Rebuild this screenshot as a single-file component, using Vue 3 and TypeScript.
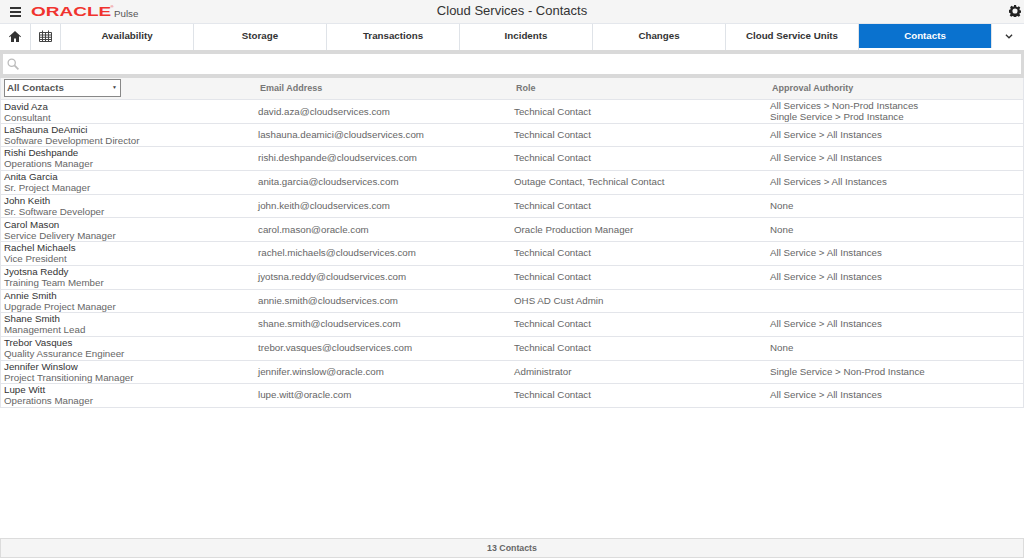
<script setup lang="ts">
interface Contact { name: string; title: string; email: string; role: string; auth: string[] }
const tabs: string[] = ['Availability', 'Storage', 'Transactions', 'Incidents', 'Changes', 'Cloud Service Units', 'Contacts']
const a = ['All Service > All Instances']
const contacts: Contact[] = [
  { name: 'David Aza', title: 'Consultant', email: 'david.aza@cloudservices.com', role: 'Technical Contact', auth: ['All Services > Non-Prod Instances', 'Single Service > Prod Instance'] },
  { name: 'LaShauna DeAmici', title: 'Software Development Director', email: 'lashauna.deamici@cloudservices.com', role: 'Technical Contact', auth: a },
  { name: 'Rishi Deshpande', title: 'Operations Manager', email: 'rishi.deshpande@cloudservices.com', role: 'Technical Contact', auth: a },
  { name: 'Anita Garcia', title: 'Sr. Project Manager', email: 'anita.garcia@cloudservices.com', role: 'Outage Contact, Technical Contact', auth: ['All Services > All Instances'] },
  { name: 'John Keith', title: 'Sr. Software Developer', email: 'john.keith@cloudservices.com', role: 'Technical Contact', auth: ['None'] },
  { name: 'Carol Mason', title: 'Service Delivery Manager', email: 'carol.mason@oracle.com', role: 'Oracle Production Manager', auth: ['None'] },
  { name: 'Rachel Michaels', title: 'Vice President', email: 'rachel.michaels@cloudservices.com', role: 'Technical Contact', auth: a },
  { name: 'Jyotsna Reddy', title: 'Training Team Member', email: 'jyotsna.reddy@cloudservices.com', role: 'Technical Contact', auth: a },
  { name: 'Annie Smith', title: 'Upgrade Project Manager', email: 'annie.smith@cloudservices.com', role: 'OHS AD Cust Admin', auth: [] },
  { name: 'Shane Smith', title: 'Management Lead', email: 'shane.smith@cloudservices.com', role: 'Technical Contact', auth: a },
  { name: 'Trebor Vasques', title: 'Quality Assurance Engineer', email: 'trebor.vasques@cloudservices.com', role: 'Technical Contact', auth: ['None'] },
  { name: 'Jennifer Winslow', title: 'Project Transitioning Manager', email: 'jennifer.winslow@oracle.com', role: 'Administrator', auth: ['Single Service > Non-Prod Instance'] },
  { name: 'Lupe Witt', title: 'Operations Manager', email: 'lupe.witt@oracle.com', role: 'Technical Contact', auth: a },
]
</script>

<template>
  <div class="page">
    <header class="top">
      <div class="brand">
        <svg class="burger" width="11" height="10" viewBox="0 0 11 10"><path d="M0 0h11v2H0zM0 4h11v2H0zM0 8h11v2H0z" fill="#333" /></svg>
        <span class="logo">ORACLE</span><span class="reg">®</span>
        <span class="pulse">Pulse</span>
      </div>
      <h1 class="title">Cloud Services - Contacts</h1>
      <svg class="gear" width="12" height="12" viewBox="0 0 14 14">
        <path d="M5.800 0h2.400l.4 2 1.200.5 1.700-1.100 1.700 1.700-1.100 1.700.5 1.200 2 .4v2.400l-2 .4-.5 1.200 1.100 1.700-1.700 1.700-1.700-1.100-1.200.5-.4 2H5.800l-.4-2-1.200-.5-1.700 1.100-1.700-1.700 1.100-1.700-.5-1.200-2-.4V5.800l2-.4.5-1.200L1.300 2.500 3 .8l1.700 1.100 1.200-.5z" fill="#222" />
        <circle cx="7" cy="7" r="3" fill="#f5f5f5" />
      </svg>
    </header>

    <nav class="tabs">
      <div class="tab icon home">
        <svg width="12" height="11" viewBox="0 0 12 11"><path d="M6 0 0 5.500l.7.700L2 5v6h3V7.500h2V11h3V5l1.300 1.200.7-.7z" fill="#333" /></svg>
      </div>
      <div class="tab icon cal">
        <svg width="13" height="12" viewBox="0 0 13 12" fill="none" stroke="#444" stroke-width="1"><path d="M.5 2.500h12v9H.5zM.5 5h12M.5 7.250h12M.5 9.500h12M3.500 2.500v9M6.500 2.500v9M9.500 2.500v9M3.500 .5v2M9.500 .5v2" /></svg>
      </div>
      <div v-for="t in tabs" :key="t" class="tab" :class="{ active: t === 'Contacts' }">{{ t }}</div>
      <div class="tab icon more">
        <svg width="8" height="5" viewBox="0 0 9 6" fill="none" stroke="#333" stroke-width="1.600"><path d="M.8 1 4.500 4.500 8.200 1" /></svg>
      </div>
    </nav>

    <div class="search">
      <svg width="12" height="12" viewBox="0 0 14 14" fill="none" stroke="#bbb"><circle cx="5.500" cy="5.500" r="4.200" stroke-width="1.500" /><path d="m8.700 8.700 4.600 4.600" stroke-width="2" /></svg>
    </div>

    <section class="table">
      <div class="row head">
        <div class="cell first"><div class="select"><span>All Contacts</span><i>▼</i></div></div>
        <div class="cell hcell">Email Address</div>
        <div class="cell hcell">Role</div>
        <div class="cell hcell">Approval Authority</div>
      </div>
      <div v-for="c in contacts" :key="c.email" class="row">
        <div class="cell first">
          <div class="name">{{ c.name }}</div>
          <div>{{ c.title }}</div>
        </div>
        <div class="cell">{{ c.email }}</div>
        <div class="cell">{{ c.role }}</div>
        <div class="cell"><div v-for="l in c.auth" :key="l">{{ l }}</div></div>
      </div>
    </section>

    <footer class="foot">13 Contacts</footer>
  </div>
</template>

<style scoped>
.page {
  display: flex;
  flex-direction: column;
  height: 558px;
  overflow: hidden;
  background: #fff;
  font-family: "Liberation Sans", Arial, sans-serif;
  font-size: 9.750px;
  color: #666;
}
.top {
  position: relative;
  display: flex;
  align-items: center;
  justify-content: center;
  flex: none;
  height: 23px;
  background: #f5f5f5;
}
.brand {
  position: absolute;
  left: 10px;
  top: 0;
  display: flex;
  align-items: center;
  height: 23px;
}
.burger { margin-right: 10px; }
.logo {
  color: #f0332e;
  font-size: 13px;
  font-weight: 700;
  transform: scaleX(1.460);
  transform-origin: left center;
  width: 79.500px;
}
.reg {
  width: 3.500px;
  margin-top: -9px;
  font-size: 4px;
  line-height: 4px;
  color: #f0332e;
}
.pulse { margin: 4px 0 0 0; font-size: 9.750px; color: #555; }
.title {
  margin: 0 0 2px;
  font-size: 13px;
  font-weight: 400;
  color: #333;
}
.gear { position: absolute; right: 3px; top: 5px; }
.tabs {
  display: flex;
  flex: none;
  height: 27px;
  border-top: 1px solid #e4e7ec;
  box-sizing: border-box;
}
.tab {
  display: flex;
  align-items: center;
  justify-content: center;
  flex: 0 0 133px;
  box-sizing: border-box;
  padding-bottom: 4px;
  border-right: 1px solid #dfe3e8;
  font-size: 9.750px;
  font-weight: 700;
  color: #333;
}
.tab.home { flex-basis: 31px; padding-bottom: 2px; }
.tab.cal { flex-basis: 30px; padding-bottom: 2px; }
.tab.more { flex: 1; border-right: 0; padding-bottom: 2px; }
.tab.active {
  background: #0a72cf;
  color: #fff;
  margin-bottom: 2px;
  padding-bottom: 2px;
  margin-right: 1px;
}
.search {
  display: flex;
  align-items: center;
  flex: none;
  height: 28px;
  box-sizing: border-box;
  padding-left: 4px;
  border: 3px solid #d9d9d9;
  border-width: 4px 3px 4px 3px;
  background: #fff;
}
.table { flex: 1; }
.row {
  display: grid;
  grid-template-columns: 258px 256px 256px 1fr;
  align-items: center;
  height: 23.700px;
  box-sizing: border-box;
  border: 1px solid #e3e5ea;
  border-width: 0 1px 1px 1px;
  line-height: 11px;
}
.row.head {
  height: 22px;
  background: #f5f5f5;
}
.cell { min-width: 0; }
.first { padding-left: 3px; }
.row:not(.head) .first { padding-bottom: 0.500px; }
.row.head .first { padding-bottom: 2px; }
.row:not(.head) .cell:not(.first) { margin-left: -1px; padding-bottom: 1.500px; }
.hcell { font-size: 9px; font-weight: 700; color: #777; padding-left: 1px; }
.name { color: #333; }
.select {
  display: flex;
  align-items: center;
  justify-content: space-between;
  width: 117px;
  height: 18px;
  box-sizing: border-box;
  padding: 0 3px 0 2px;
  border: 1px solid #888;
  background: #fff;
  font-weight: 700;
  font-size: 9.750px;
  color: #555;
}
.select i { font-size: 5px; font-style: normal; color: #444; }
.foot {
  flex: none;
  height: 20px;
  box-sizing: border-box;
  padding-bottom: 1px;
  display: flex;
  align-items: center;
  justify-content: center;
  background: #f5f5f5;
  border: 1px solid #dcdcdc;
  font-size: 8.800px;
  font-weight: 700;
  color: #666;
}
</style>
